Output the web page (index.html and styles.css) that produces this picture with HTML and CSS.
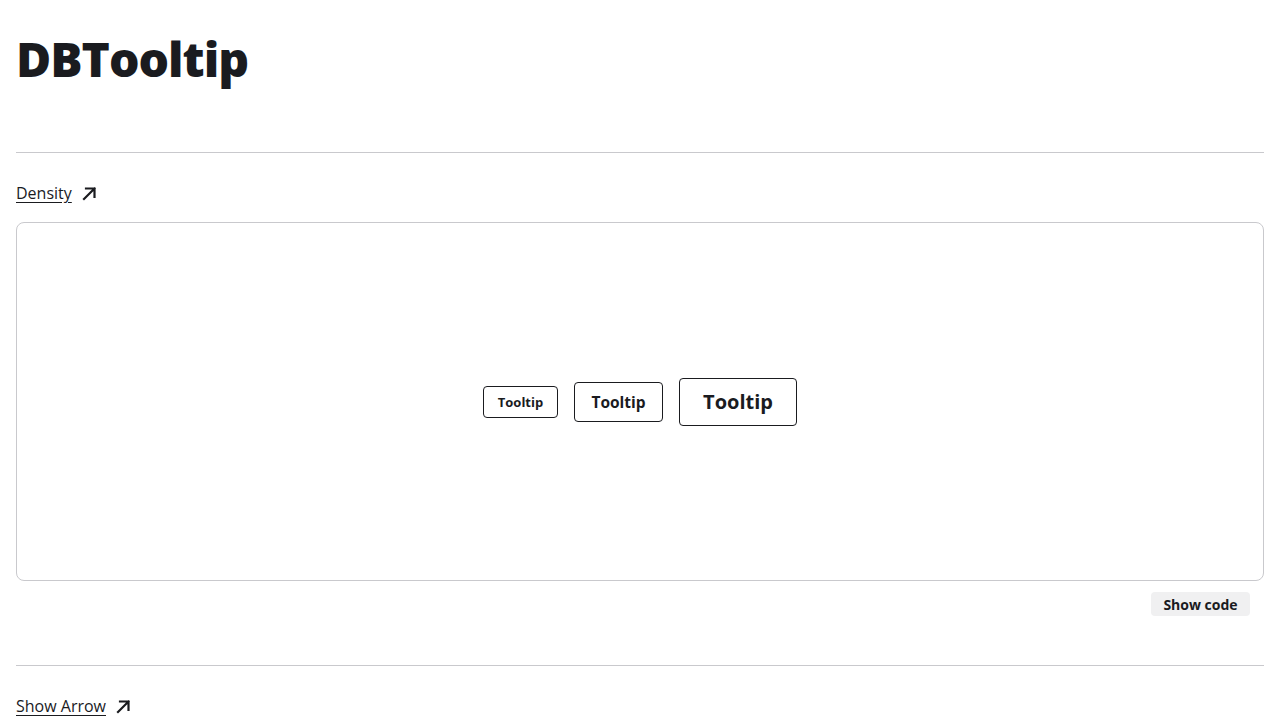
FILE: index.html
```html
<!DOCTYPE html>
<html lang="en">
<head>
<meta charset="utf-8">
<title>DBTooltip</title>
<link rel="stylesheet" href="styles.css">
</head>
<body>
<main class="page">
  <h1 class="title">DBTooltip</h1>
  <section class="example">
    <hr class="divider">
    <a class="ex-link" href="#">Density<svg class="arrow" viewBox="0 0 16 16" width="16" height="16"><path d="M3 14 L13.5 3.5 M5 3.5 H13.5 V12" fill="none" stroke="#1a1b1f" stroke-width="2.2" stroke-linecap="square"/></svg></a>
    <div class="card">
      <button class="tip tip-sm">Tooltip</button>
      <button class="tip tip-md">Tooltip</button>
      <button class="tip tip-lg">Tooltip</button>
    </div>
    <div class="card-foot"><button class="show-code">Show code</button></div>
  </section>
  <section class="example">
    <hr class="divider">
    <a class="ex-link" href="#">Show Arrow<svg class="arrow" viewBox="0 0 16 16" width="16" height="16"><path d="M3 14 L13.5 3.5 M5 3.5 H13.5 V12" fill="none" stroke="#1a1b1f" stroke-width="2.2" stroke-linecap="square"/></svg></a>
  </section>
</main>
</body>
</html>
```
FILE: styles.css
```css
html, body { margin: 0; padding: 0; background: #fff; }
body { font-family: "Open Sans", "Noto Sans", sans-serif; color: #1a1b1f; }
.page { padding: 0 16px; }
.title {
  margin: 0;
  padding-top: 27px;
  font-size: 48px;
  line-height: 64px;
  font-weight: 800;
  letter-spacing: -1px;
}
.divider { border: 0; border-top: 1px solid #c9c9cd; margin: 61px 0 0; }
.example + .example .divider { margin-top: 49px; }
.ex-link {
  display: inline-flex;
  align-items: center;
  gap: 9px;
  margin-top: 29px;
  font-size: 16px;
  line-height: 22px;
  color: #1a1b1f;
  text-decoration: underline;
  text-underline-offset: 3px;
}
.arrow { display: block; }
.card {
  margin-top: 18px;
  height: 357px;
  border: 1px solid #c9c9cd;
  border-radius: 8px;
  display: flex;
  align-items: center;
  justify-content: center;
  gap: 16px;
}
.tip {
  font-family: "Open Sans", "Noto Sans", sans-serif;
  font-weight: 700;
  color: #1a1b1f;
  background: #fff;
  border: 1px solid #1a1b1f;
  border-radius: 4px;
  padding: 0;
}
.tip-sm { height: 32px; width: 75px; font-size: 13px; }
.tip-md { height: 40px; width: 89px; font-size: 15.5px; }
.tip-lg { height: 48px; width: 118px; font-size: 20px; }
.card-foot { display: flex; justify-content: flex-end; padding: 11px 14px 0 0; }
.show-code {
  font-family: "Open Sans", "Noto Sans", sans-serif;
  font-weight: 700;
  font-size: 14px;
  color: #1a1b1f;
  background: #f0f0f1;
  border: 0;
  border-radius: 4px;
  height: 24px;
  width: 99px;
  padding: 0;
}
```
